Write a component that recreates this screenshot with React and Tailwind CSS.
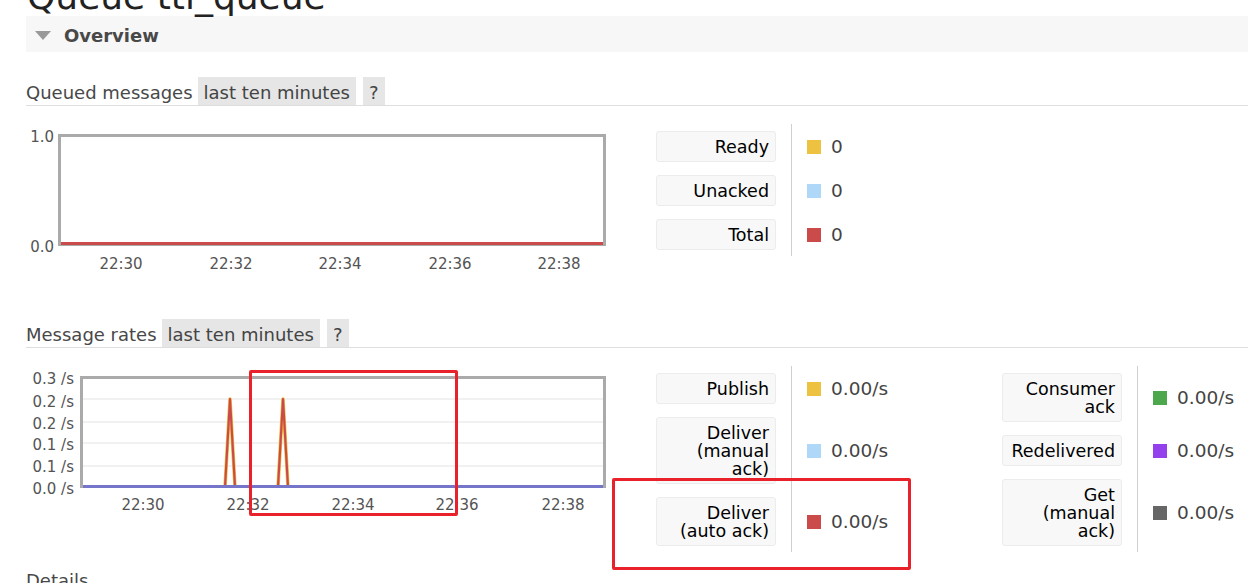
import React from "react";

const FONT = { fontFamily: '"DejaVu Sans", Verdana, sans-serif' };

function LegendRow({ lines, color, value }) {
    return (
        <div className="flex">
            <div className="w-[120px] py-[6.5px] flex items-center">
                <div className="w-full rounded-[3px] border border-[#ececec] bg-[#f8f8f8] pt-[6.5px] pb-[4.5px] pl-[6px] pr-[6px] text-right text-[17.5px] leading-[18px] text-black">
                    {lines.map((l, i) => (
                        <div key={i}>{l}</div>
                    ))}
                </div>
            </div>
            <div className="ml-[15px] flex items-center border-l border-[#cfcfcf] pl-[15px] pt-[2px]">
                <span className="h-[14px] w-[14px] shrink-0" style={{ background: color }} />
                <span className="ml-[10px] text-[18.5px] text-[#444]">{value}</span>
            </div>
        </div>
    );
}

function SectionHeader({ title }) {
    return (
        <div className="flex h-[29px] items-stretch border-b border-[#dedede] text-[18px] text-[#484848]">
            <span className="flex items-center pr-[5px] pt-[2px]">{title}</span>
            <span className="flex items-center bg-[#e6e6e6] px-[6px] pt-[2px] text-[#444]">last ten minutes</span>
            <span className="ml-[7px] flex w-[22px] items-center justify-center bg-[#e6e6e6] pt-[2px] text-[#444]">?</span>
        </div>
    );
}

function QueuedChart() {
    const xs = [
        [95, "22:30"],
        [205, "22:32"],
        [314, "22:34"],
        [424, "22:36"],
        [533, "22:38"],
    ];
    return (
        <svg width="584" height="170" className="shrink-0" style={FONT}>
            <rect x="33.5" y="29.5" width="545" height="109" fill="#fff" stroke="#aaa" strokeWidth="3" />
            <line x1="35" y1="137.5" x2="577" y2="137.5" stroke="#cb4b4b" strokeWidth="3" />
            <text x="28" y="31.5" textAnchor="end" dominantBaseline="middle" fontSize="15" fill="#545454">1.0</text>
            <text x="28" y="141.5" textAnchor="end" dominantBaseline="middle" fontSize="15" fill="#545454">0.0</text>
            {xs.map(([x, t]) => (
                <text key={t} x={x} y="158" textAnchor="middle" dominantBaseline="middle" fontSize="15" fill="#545454">{t}</text>
            ))}
        </svg>
    );
}

function RatesChart() {
    const xs = [
        [117, "22:30"],
        [222, "22:32"],
        [327, "22:34"],
        [431, "22:36"],
        [537, "22:38"],
    ];
    const ys = [
        [31, "0.3 /s"],
        [54, "0.2 /s"],
        [76, "0.2 /s"],
        [97, "0.1 /s"],
        [119, "0.1 /s"],
        [141, "0.0 /s"],
    ];
    const spike = (c) => `${c - 5},139 ${c},51 ${c + 5},139`;
    return (
        <svg width="584" height="180" className="shrink-0" style={FONT}>
            <rect x="55.5" y="29.5" width="523" height="109" fill="#fff" />
            {[51, 74, 95, 118].map((y) => (
                <line key={y} x1="57" y1={y} x2="577" y2={y} stroke="#ececec" strokeWidth="1.5" />
            ))}
            <rect x="55.5" y="29.5" width="523" height="109" fill="none" stroke="#aaa" strokeWidth="3" />
            {[204, 257].map((c) => (
                <g key={c}>
                    <polyline points={spike(c)} fill="none" stroke="#edc240" strokeWidth="3.5" strokeLinejoin="round" />
                    <polyline points={spike(c)} fill="none" stroke="#cb4b4b" strokeWidth="2.2" strokeLinejoin="round" />
                </g>
            ))}
            <line x1="57" y1="138.5" x2="577" y2="138.5" stroke="#7575c9" strokeWidth="3" />
            {ys.map(([y, t], i) => (
                <text key={i} x="48" y={y} textAnchor="end" dominantBaseline="middle" fontSize="15" fill="#545454">{t}</text>
            ))}
            {xs.map(([x, t]) => (
                <text key={t} x={x} y="157" textAnchor="middle" dominantBaseline="middle" fontSize="15" fill="#545454">{t}</text>
            ))}
        </svg>
    );
}

export default function App() {
    return (
        <div className="relative h-[583px] w-[1248px] overflow-hidden bg-white pl-[26px]" style={FONT}>
            {/* Title, cut at the top */}
            <h1 className="-mt-[21px] ml-[1px] text-[36px] leading-[35px] text-[#222]">Queue ttl_queue</h1>

            {/* Overview bar */}
            <div className="mt-[2px] flex h-[36px] items-center bg-[#f7f7f7] pt-[2px]">
                <svg width="16" height="9" className="ml-[9px]">
                    <polygon points="0,0 16,0 8,9" fill="#999" />
                </svg>
                <span className="ml-[13px] text-[18px] font-bold text-[#484848]">Overview</span>
            </div>

            {/* Queued messages */}
            <div className="mt-[25px]">
                <SectionHeader title="Queued messages" />
            </div>
            <div className="flex">
                <QueuedChart />
                <div className="ml-[46px] mt-[18px]">
                    <LegendRow lines={["Ready"]} color="#edc240" value="0" />
                    <LegendRow lines={["Unacked"]} color="#afd8f8" value="0" />
                    <LegendRow lines={["Total"]} color="#cb4b4b" value="0" />
                </div>
            </div>

            {/* Message rates */}
            <div className="mt-[43px]">
                <SectionHeader title="Message rates" />
            </div>
            <div className="flex h-[204px]">
                <RatesChart />
                <div className="ml-[46px] mt-[18px] w-[346px]">
                    <LegendRow lines={["Publish"]} color="#edc240" value="0.00/s" />
                    <LegendRow lines={["Deliver", "(manual", "ack)"]} color="#afd8f8" value="0.00/s" />
                    <LegendRow lines={["Deliver", "(auto ack)"]} color="#cb4b4b" value="0.00/s" />
                </div>
                <div className="mt-[18px]">
                    <LegendRow lines={["Consumer", "ack"]} color="#4da74d" value="0.00/s" />
                    <LegendRow lines={["Redelivered"]} color="#9440ed" value="0.00/s" />
                    <LegendRow lines={["Get", "(manual", "ack)"]} color="#666666" value="0.00/s" />
                </div>
            </div>

            {/* Details */}
            <div className="mt-[14px] flex h-[28px] items-center text-[18px] text-[#484848]">Details</div>

            {/* Red annotation boxes */}
            <div className="absolute left-[249px] top-[370px] h-[146px] w-[209px] rounded-[2px] border-[3px] border-[#e8212b]" />
            <div className="absolute left-[612px] top-[478px] h-[92px] w-[299px] rounded-[2px] border-[3px] border-[#e8212b]" />
        </div>
    );
}
